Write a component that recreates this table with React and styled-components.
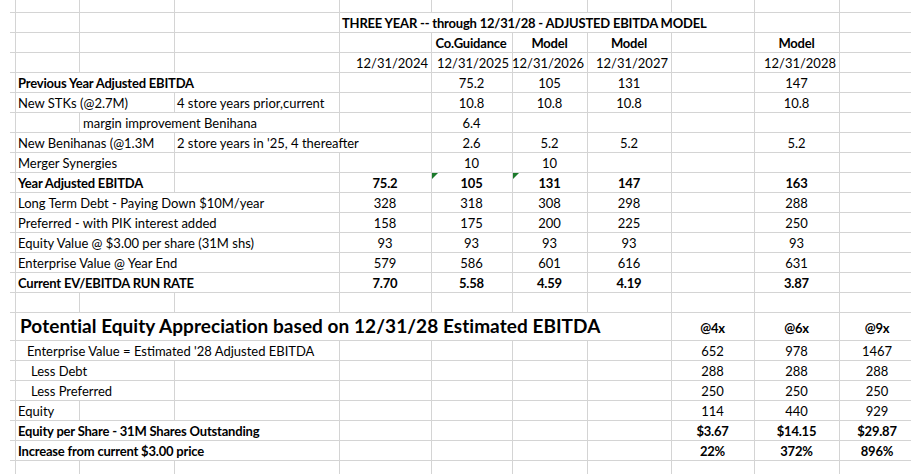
import React from "react";
import styled, { createGlobalStyle, css } from "styled-components";

const Global = createGlobalStyle`
  html, body { margin: 0; padding: 0; background: #fff; overflow: hidden; }
  body { font-family: Lato, "Liberation Sans", sans-serif; color: #000; }
`;

const COLS = [6, 64, 95, 165, 92, 81, 75, 84, 83, 85, 76];

const Sheet = styled.div`
  display: grid;
  grid-template-columns: ${COLS.map((c) => c + "px").join(" ")};
  grid-template-rows: 13px repeat(15, 20px) 28px repeat(7, 20px);
  margin-left: 10px;
  width: max-content;
`;

const Cell = styled.div`
  grid-column: span ${(p) => p.$span || 1};
  box-sizing: border-box;
  border-right: 1px solid #d4d4d4;
  border-bottom: 1px solid #d4d4d4;
  display: flex;
  align-items: flex-end;
  justify-content: ${(p) =>
    p.$align === "right" ? "flex-end" : p.$align === "center" ? "center" : "flex-start"};
  padding: 0 3px ${(p) => (p.$pb != null ? p.$pb : 1)}px ${(p) => (p.$pl != null ? p.$pl : 2)}px;
  font-size: 13px;
  line-height: 16px;
  font-weight: ${(p) => (p.$bold ? 700 : 400)};
  letter-spacing: ${(p) => (p.$bold ? "-0.2px" : "0")};
  white-space: nowrap;
  position: relative;
  ${(p) =>
    p.$big &&
    css`
      font-size: 19px;
      line-height: 24px;
      letter-spacing: 0.05px;
      padding-bottom: 2px;
    `}
  ${(p) =>
    p.$flag &&
    css`
      &::before {
        content: "";
        position: absolute;
        top: 0;
        left: 0;
        border-top: 6px solid #1b7a2b;
        border-right: 6px solid transparent;
      }
    `}
`;

const C = "center";
const R = "right";

// each row: list of [colIndex, text, opts]
const rows = [
  [],
  [[4, "THREE YEAR -- through 12/31/28 - ADJUSTED EBITDA MODEL", { span: 5, bold: true }]],
  [
    [5, "Co.Guidance", { bold: true, align: C, pl: 1 }],
    [6, "Model", { bold: true, align: C }],
    [7, "Model", { bold: true, align: C }],
    [9, "Model", { bold: true, align: C }],
  ],
  [
    [4, "12/31/2024", { align: R }],
    [5, "12/31/2025", { align: R }],
    [6, "12/31/2026", { align: R }],
    [7, "12/31/2027", { align: R }],
    [9, "12/31/2028", { align: R }],
  ],
  [
    [1, "Previous Year Adjusted EBITDA", { span: 3, bold: true }],
    [5, "75.2", { align: C }],
    [6, "105", { align: C }],
    [7, "131", { align: C }],
    [9, "147", { align: C }],
  ],
  [
    [1, "New STKs (@2.7M)", { span: 2 }],
    [3, "4 store years prior,current", {}],
    [5, "10.8", { align: C }],
    [6, "10.8", { align: C }],
    [7, "10.8", { align: C }],
    [9, "10.8", { align: C }],
  ],
  [
    [2, "margin improvement Benihana", { span: 2, pl: 3 }],
    [5, "6.4", { align: C }],
  ],
  [
    [1, "New Benihanas (@1.3M", { span: 2 }],
    [3, "2 store years in '25, 4 thereafter", { span: 2 }],
    [5, "2.6", { align: C }],
    [6, "5.2", { align: C }],
    [7, "5.2", { align: C }],
    [9, "5.2", { align: C }],
  ],
  [
    [1, "Merger Synergies", { span: 2 }],
    [5, "10", { align: C }],
    [6, "10", { align: C }],
  ],
  [
    [1, "Year Adjusted EBITDA", { span: 2, bold: true }],
    [4, "75.2", { align: C, bold: true }],
    [5, "105", { align: C, bold: true, flag: true }],
    [6, "131", { align: C, bold: true, flag: true }],
    [7, "147", { align: C, bold: true }],
    [9, "163", { align: C, bold: true }],
  ],
  [
    [1, "Long Term Debt - Paying Down $10M/year", { span: 3 }],
    [4, "328", { align: C }],
    [5, "318", { align: C }],
    [6, "308", { align: C }],
    [7, "298", { align: C }],
    [9, "288", { align: C }],
  ],
  [
    [1, "Preferred - with PIK interest added", { span: 3 }],
    [4, "158", { align: C }],
    [5, "175", { align: C }],
    [6, "200", { align: C }],
    [7, "225", { align: C }],
    [9, "250", { align: C }],
  ],
  [
    [1, "Equity Value @ $3.00 per share (31M shs)", { span: 3 }],
    [4, "93", { align: C }],
    [5, "93", { align: C }],
    [6, "93", { align: C }],
    [7, "93", { align: C }],
    [9, "93", { align: C }],
  ],
  [
    [1, "Enterprise Value @ Year End", { span: 3 }],
    [4, "579", { align: C }],
    [5, "586", { align: C }],
    [6, "601", { align: C }],
    [7, "616", { align: C }],
    [9, "631", { align: C }],
  ],
  [
    [1, "Current EV/EBITDA RUN RATE", { span: 3, bold: true }],
    [4, "7.70", { align: C, bold: true }],
    [5, "5.58", { align: C, bold: true }],
    [6, "4.59", { align: C, bold: true }],
    [7, "4.19", { align: C, bold: true }],
    [9, "3.87", { align: C, bold: true }],
  ],
  [],
  [
    [1, "Potential Equity Appreciation based on 12/31/28 Estimated EBITDA", { span: 7, bold: true, big: true, pl: 4 }],
    [8, "@4x", { align: C, bold: true, pb: 4 }],
    [9, "@6x", { align: C, bold: true, pb: 4 }],
    [10, "@9x", { align: C, bold: true, pb: 4 }],
  ],
  [
    [1, "Enterprise Value = Estimated '28 Adjusted EBITDA", { span: 3, pl: 11 }],
    [8, "652", { align: C }],
    [9, "978", { align: C }],
    [10, "1467", { align: C }],
  ],
  [
    [1, "Less Debt", { span: 2, pl: 15 }],
    [8, "288", { align: C }],
    [9, "288", { align: C }],
    [10, "288", { align: C }],
  ],
  [
    [1, "Less Preferred", { span: 2, pl: 15 }],
    [8, "250", { align: C }],
    [9, "250", { align: C }],
    [10, "250", { align: C }],
  ],
  [
    [1, "Equity", {}],
    [8, "114", { align: C }],
    [9, "440", { align: C }],
    [10, "929", { align: C }],
  ],
  [
    [1, "Equity per Share - 31M Shares Outstanding", { span: 3, bold: true }],
    [8, "$3.67", { align: C, bold: true }],
    [9, "$14.15", { align: C, bold: true }],
    [10, "$29.87", { align: C, bold: true }],
  ],
  [
    [1, "Increase from current $3.00 price", { span: 3, bold: true }],
    [8, "22%", { align: C, bold: true }],
    [9, "372%", { align: C, bold: true }],
    [10, "896%", { align: C, bold: true }],
  ],
  [],
];

function Row({ cells, r }) {
  const out = [];
  let col = 0;
  const sorted = [...cells].sort((a, b) => a[0] - b[0]);
  for (const [c, text, o] of sorted) {
    while (col < c) {
      out.push(<Cell key={`${r}-${col}`} />);
      col++;
    }
    out.push(
      <Cell
        key={`${r}-${col}`}
        $span={o.span}
        $align={o.align}
        $bold={o.bold}
        $pl={o.pl}
        $pb={o.pb}
        $big={o.big}
        $flag={o.flag}
      >
        {text}
      </Cell>
    );
    col += o.span || 1;
  }
  while (col < COLS.length) {
    out.push(<Cell key={`${r}-${col}`} />);
    col++;
  }
  return out;
}

export default function App() {
  return (
    <>
      <Global />
      <Sheet>
        {rows.map((cells, r) => (
          <Row key={r} cells={cells} r={r} />
        ))}
      </Sheet>
    </>
  );
}
